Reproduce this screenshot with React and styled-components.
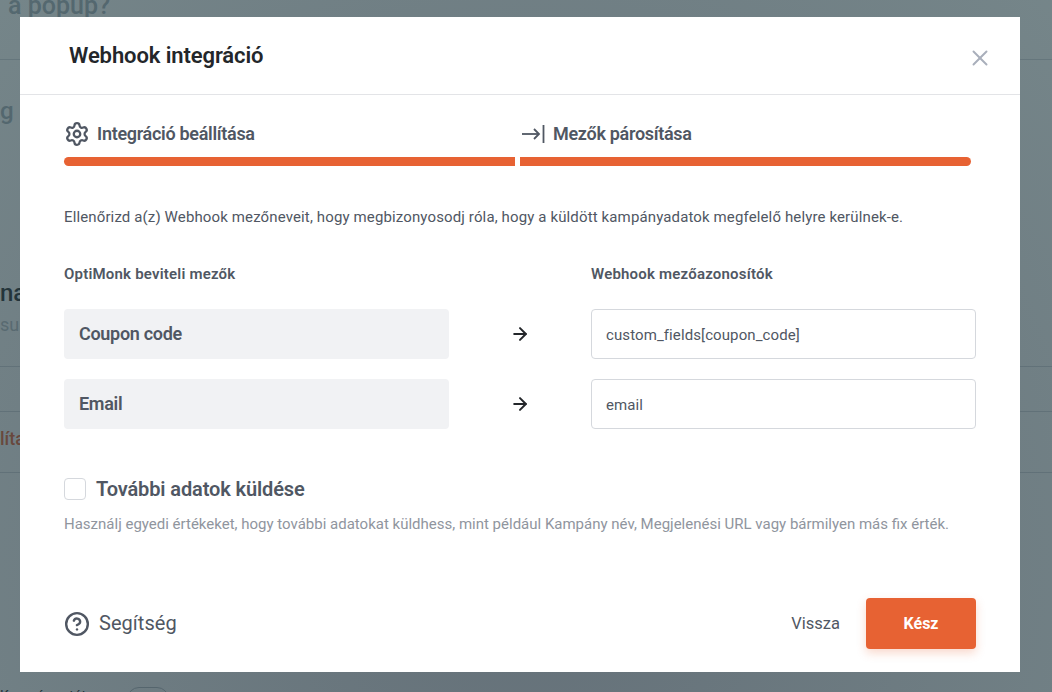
import React from "react";
import styled, { createGlobalStyle } from "styled-components";
import { X, Settings, ArrowRight, CircleHelp } from "lucide-react";

const colors = {
  orange: "#e76233",
  dark: "#23262a",
  text: "#505763",
  muted: "#90959e",
  border: "#d5d8dd",
  field: "#f1f2f4",
};

const GlobalStyle = createGlobalStyle`
  html, body {
    margin: 0;
    height: 100%;
    overflow: hidden;
    font-family: Roboto, "Liberation Sans", sans-serif;
  }
`;

const App = () => {
  return (
    <>
      <GlobalStyle />
      <BackPage>
        <BackTitle>a popup?</BackTitle>
        <BackLine $top={39} />
        <BackLetter>g</BackLetter>
        <BackName>na</BackName>
        <BackSub>sur</BackSub>
        <BackLine $top={32} />
        <BackLine $top={44} />
        <BackLink>líta</BackLink>
        <BackLine $top={21} />
        <BackFooter>
          Kampány státusz
          <BackPill />
        </BackFooter>
      </BackPage>
      <Overlay>
        <Modal>
          <ModalHeader>
            <ModalTitle>Webhook integráció</ModalTitle>
            <CloseButton>
              <X size={26} strokeWidth={1.8} />
            </CloseButton>
          </ModalHeader>
          <ModalBody>
            <Steps>
              <Step>
                <StepLabel>
                  <Settings size={26} strokeWidth={2.1} />
                  <StepText>Integráció beállítása</StepText>
                </StepLabel>
                <StepBar $first />
              </Step>
              <Step>
                <StepLabel $indent={2}>
                  <svg width="24" height="24" viewBox="0 0 24 24" fill="none" stroke="currentColor" strokeWidth="1.8">
                    <path d="M0 12H17" />
                    <path d="M12 7l5 5-5 5" />
                    <path d="M21.5 3V21" />
                  </svg>
                  <StepText>Mezők párosítása</StepText>
                </StepLabel>
                <StepBar />
              </Step>
            </Steps>
            <Intro>
              Ellenőrizd a(z) Webhook mezőneveit, hogy megbizonyosodj róla, hogy a küldött kampányadatok megfelelő helyre kerülnek-e.
            </Intro>
            <FieldGrid>
              <ColumnTitle>OptiMonk beviteli mezők</ColumnTitle>
              <span />
              <ColumnTitle>Webhook mezőazonosítók</ColumnTitle>
              <FieldName>Coupon code</FieldName>
              <ArrowCell>
                <ArrowRight size={20} strokeWidth={2.4} />
              </ArrowCell>
              <FieldInput defaultValue="custom_fields[coupon_code]" />
              <FieldName>Email</FieldName>
              <ArrowCell>
                <ArrowRight size={20} strokeWidth={2.4} />
              </ArrowCell>
              <FieldInput defaultValue="email" />
            </FieldGrid>
            <CheckRow>
              <CheckBox />
              <CheckLabel>További adatok küldése</CheckLabel>
            </CheckRow>
            <Hint>
              Használj egyedi értékeket, hogy további adatokat küldhess, mint például Kampány név, Megjelenési URL vagy bármilyen más fix érték.
            </Hint>
          </ModalBody>
          <ModalFooter>
            <HelpLink>
              <CircleHelp size={26} strokeWidth={2.2} />
              <HelpText>Segítség</HelpText>
            </HelpLink>
            <FooterActions>
              <BackButton>Vissza</BackButton>
              <DoneButton>Kész</DoneButton>
            </FooterActions>
          </ModalFooter>
        </Modal>
      </Overlay>
    </>
  );
};

const BackPage = styled.div`
  height: 692px;
  overflow: hidden;
  background: #fff;
`;

const BackTitle = styled.div`
  font-size: 25px;
  font-weight: 500;
  line-height: 28px;
  margin-top: -8px;
  padding-left: 8px;
  color: #a3aeb7;
`;

const BackLine = styled.div`
  height: 1px;
  margin-top: ${({ $top }) => $top}px;
  background: #d5d8dd;
`;

const BackLetter = styled.div`
  font-size: 24px;
  font-weight: 500;
  line-height: 28px;
  margin-top: 37px;
  color: #a3aeb7;
`;

const BackName = styled.div`
  font-size: 24px;
  font-weight: 500;
  line-height: 28px;
  margin-top: 154px;
  color: #23262a;
`;

const BackSub = styled.div`
  font-size: 18px;
  line-height: 18px;
  margin-top: 9px;
  color: #b9bfc6;
`;

const BackLink = styled.div`
  font-size: 18px;
  font-weight: 500;
  line-height: 24px;
  margin-top: 15px;
  color: ${colors.orange};
`;

const BackFooter = styled.div`
  display: flex;
  align-items: flex-start;
  gap: 19px;
  margin-top: 213px;
  font-size: 14px;
  line-height: 20px;
  color: #23262a;
`;

const BackPill = styled.span`
  width: 40px;
  height: 24px;
  margin-top: 1px;
  border: 1px solid #b9bfc6;
  border-radius: 12px;
`;

const Overlay = styled.div`
  position: fixed;
  inset: 0;
  display: flex;
  justify-content: center;
  align-items: flex-start;
  padding: 17px 12px 0 0;
  background: radial-gradient(ellipse at 50% 80%, rgba(17, 35, 48, 0.65) 0%, rgba(43, 68, 74, 0.65) 100%);
`;

const Modal = styled.div`
  width: 1000px;
  height: 655px;
  display: flex;
  flex-direction: column;
  background: #fff;
`;

const ModalHeader = styled.div`
  height: 78px;
  flex: none;
  box-sizing: border-box;
  display: flex;
  align-items: center;
  justify-content: space-between;
  padding: 0 27px 0 49px;
  border-bottom: 1px solid #e3e4e7;
`;

const ModalTitle = styled.h2`
  margin: 0;
  font-size: 22px;
  font-weight: 600;
  letter-spacing: -0.1px;
  color: ${colors.dark};
`;

const CloseButton = styled.button`
  display: flex;
  padding: 0;
  margin-top: 5px;
  border: 0;
  background: none;
  color: #a9afbb;
`;

const ModalBody = styled.div`
  flex: 1;
  padding: 0 44px;
`;

const Steps = styled.div`
  display: grid;
  grid-template-columns: 451px 451px;
  column-gap: 5px;
  padding-top: 27px;
`;

const Step = styled.div`
  display: flex;
  flex-direction: column;
`;

const StepLabel = styled.div`
  display: flex;
  align-items: center;
  gap: 7px;
  height: 24px;
  padding-left: ${({ $indent }) => $indent || 0}px;
  color: ${colors.text};
`;

const StepText = styled.span`
  margin-top: -2px;
  font-size: 18px;
  font-weight: 600;
  letter-spacing: -0.3px;
`;

const StepBar = styled.div`
  height: 9px;
  margin-top: 11px;
  background: ${colors.orange};
  border-radius: ${({ $first }) => ($first ? "5px 0 0 5px" : "0 5px 5px 0")};
`;

const Intro = styled.p`
  margin: 42px 0 0;
  font-size: 15px;
  line-height: 18px;
  letter-spacing: 0.13px;
  color: ${colors.text};
  white-space: nowrap;
`;

const FieldGrid = styled.div`
  display: grid;
  grid-template-columns: 385px 142px 385px;
  grid-template-rows: 24px 50px 50px;
  row-gap: 20px;
  margin-top: 39px;
  width: 912px;
`;

const ColumnTitle = styled.div`
  font-size: 15px;
  font-weight: 600;
  line-height: 18px;
  letter-spacing: 0.2px;
  color: ${colors.text};
`;

const FieldName = styled.div`
  display: flex;
  align-items: center;
  padding: 0 0 2px 15px;
  font-size: 18px;
  font-weight: 600;
  letter-spacing: -0.3px;
  color: ${colors.text};
  background: ${colors.field};
  border-radius: 4px;
`;

const ArrowCell = styled.div`
  display: flex;
  align-items: center;
  justify-content: center;
  color: ${colors.dark};
`;

const FieldInput = styled.input`
  box-sizing: border-box;
  width: 100%;
  height: 50px;
  padding: 2px 14px 0;
  border: 1px solid ${colors.border};
  border-radius: 4px;
  outline: none;
  font-family: inherit;
  font-size: 15px;
  letter-spacing: 0.1px;
  color: ${colors.text};
  background: #fff;
`;

const CheckRow = styled.div`
  display: flex;
  align-items: center;
  gap: 10px;
  margin-top: 48px;
`;

const CheckBox = styled.span`
  box-sizing: border-box;
  width: 22px;
  height: 22px;
  border: 1px solid ${colors.border};
  border-radius: 4px;
`;

const CheckLabel = styled.span`
  font-size: 20px;
  font-weight: 600;
  letter-spacing: -0.12px;
  color: ${colors.text};
`;

const Hint = styled.p`
  margin: 14px 0 0;
  font-size: 15px;
  line-height: 18px;
  color: ${colors.muted};
  white-space: nowrap;
`;

const ModalFooter = styled.div`
  flex: none;
  display: flex;
  align-items: center;
  justify-content: space-between;
  height: 51px;
  padding: 0 44px 23px 44px;
`;

const HelpLink = styled.div`
  display: flex;
  align-items: center;
  gap: 9px;
  color: ${colors.text};
`;

const HelpText = styled.span`
  margin-top: -2px;
  font-size: 20px;
  letter-spacing: 0.05px;
`;

const FooterActions = styled.div`
  display: flex;
  align-items: center;
  gap: 26px;
`;

const BackButton = styled.button`
  padding: 0;
  border: 0;
  background: none;
  font-family: inherit;
  font-size: 16.5px;
  font-weight: 400;
  color: ${colors.text};
`;

const DoneButton = styled.button`
  width: 110px;
  height: 51px;
  border: 0;
  border-radius: 4px;
  font-family: inherit;
  font-size: 16px;
  font-weight: 700;
  color: #fff;
  background: ${colors.orange};
  box-shadow: 0 4px 10px rgba(231, 98, 51, 0.25);
`;

export default App;
